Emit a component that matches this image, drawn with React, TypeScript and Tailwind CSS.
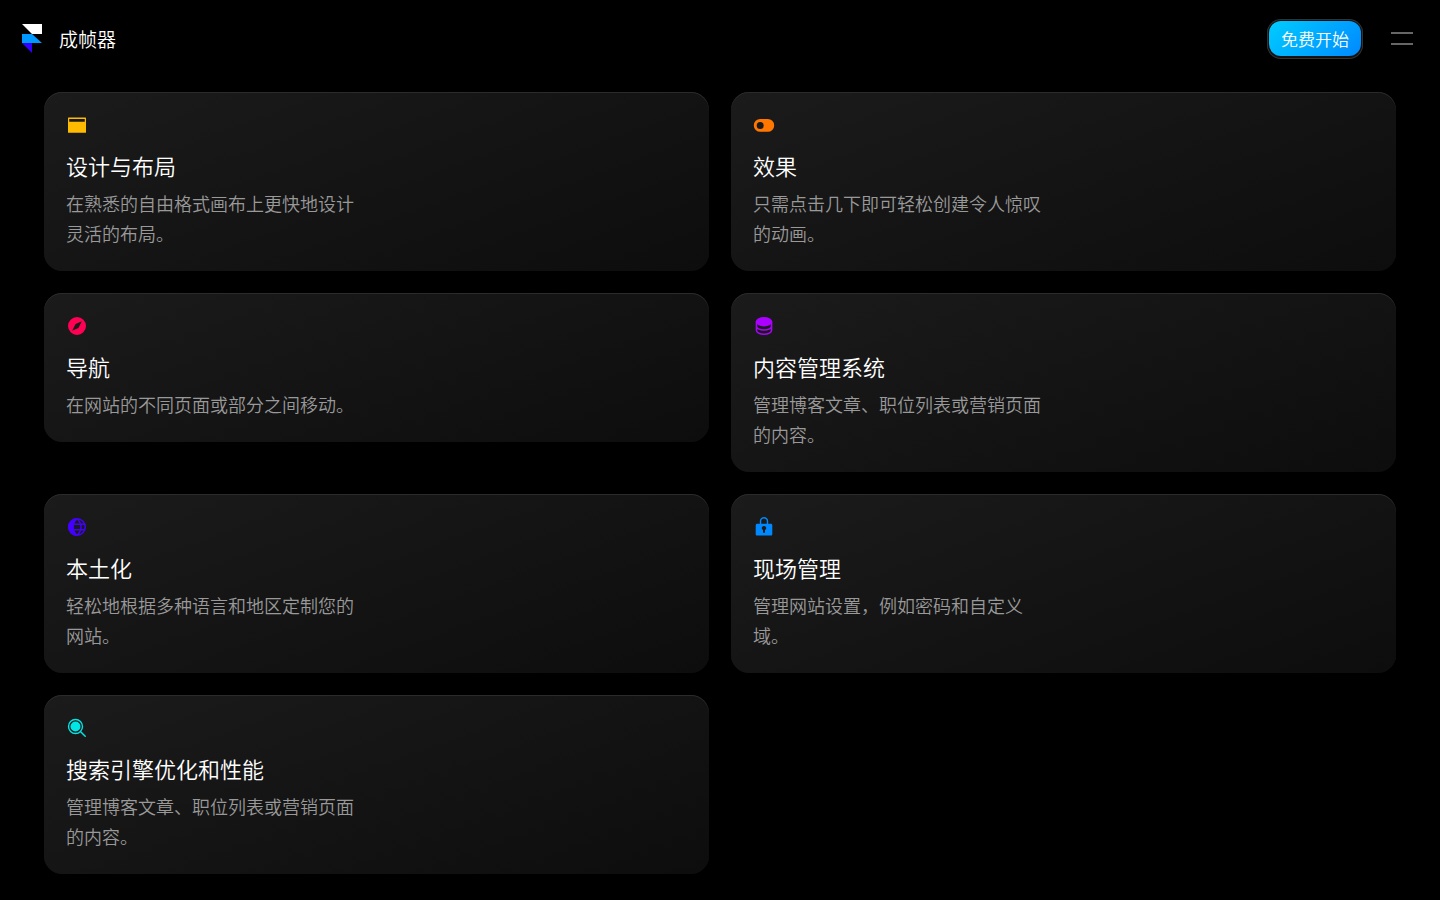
import type { ReactNode } from 'react'

interface Feature {
  title: string
  description: string
  icon: ReactNode
}

const features: Feature[] = [
  {
    title: '设计与布局',
    description: '在熟悉的自由格式画布上更快地设计灵活的布局。',
    icon: (
      <path
        fill="#ffbb00"
        fillRule="evenodd"
        d="M2.500 3.500h17a.5.5 0 0 1 .5.5v14.300a.5.5 0 0 1-.5.5h-17a.5.5 0 0 1-.5-.5V4a.5.5 0 0 1 .5-.5Zm.7 1.400v2.800h15.600V4.900Z"
      />
    ),
  },
  {
    title: '效果',
    description: '只需点击几下即可轻松创建令人惊叹的动画。',
    icon: (
      <path
        fill="#ff7700"
        fillRule="evenodd"
        d="M7.200 5h7.600a6.400 6.400 0 0 1 0 12.800H7.200A6.400 6.400 0 0 1 7.200 5Zm0 2.900a3.500 3.500 0 1 0 0 7 3.500 3.500 0 0 0 0-7Z"
      />
    ),
  },
  {
    title: '导航',
    description: '在网站的不同页面或部分之间移动。',
    icon: (
      <path
        fill="#ff0055"
        fillRule="evenodd"
        d="M11 2a9 9 0 1 1 0 18 9 9 0 0 1 0-18Zm4.900 4.200-6.300 2.900-3.500 6.700 6.300-2.900Z"
      />
    ),
  },
  {
    title: '内容管理系统',
    description: '管理博客文章、职位列表或营销页面的内容。',
    icon: (
      <>
        <ellipse cx="11" cy="6.800" rx="8.300" ry="4.700" fill="#aa00ff" />
        <path
          fill="none"
          stroke="#aa00ff"
          strokeWidth="1.500"
          d="M3.400 6.500v8.800c0 2.200 3.400 4 7.600 4s7.600-1.800 7.600-4V6.500M3.400 11c0 2.200 3.400 4 7.600 4s7.600-1.800 7.600-4"
        />
      </>
    ),
  },
  {
    title: '本土化',
    description: '轻松地根据多种语言和地区定制您的网站。',
    icon: (
      <>
        <path fill="#4400ff" d="M11 2a9 9 0 0 0 0 18C8.800 17.800 7.600 14.500 7.600 11S8.800 4.200 11 2Z" />
        <path
          fill="none"
          stroke="#4400ff"
          strokeWidth="1.400"
          d="M11 2.700a8.300 8.300 0 1 1 0 16.600 8.300 8.300 0 0 1 0-16.600c5.300 4.500 5.300 12.100 0 16.600-5.300-4.500-5.300-12.100 0-16.600ZM3.800 8.300h14.800M3.800 13.700h14.800"
        />
      </>
    ),
  },
  {
    title: '现场管理',
    description: '管理网站设置，例如密码和自定义域。',
    icon: (
      <>
        <path
          fill="#0088ff"
          fillRule="evenodd"
          d="M4.200 7.700h13.600c1 0 1.500.6 1.500 1.600v8.600c0 1-.5 1.600-1.500 1.600H4.200c-1 0-1.500-.6-1.500-1.600V9.300c0-1 .5-1.600 1.500-1.600ZM11 10a2.100 2.100 0 0 0-1 4v2.700h2V14a2.100 2.100 0 0 0-1-4Z"
        />
        <path fill="none" stroke="#0088ff" strokeWidth="1.400" d="M7.500 8.500V5.200a3.500 3.500 0 0 1 7 0v3.300" />
      </>
    ),
  },
  {
    title: '搜索引擎优化和性能',
    description: '管理博客文章、职位列表或营销页面的内容。',
    icon: (
      <>
        <circle cx="9.500" cy="9.500" r="5" fill="#00e5e5" />
        <circle cx="9.500" cy="9.500" r="7" fill="none" stroke="#00e5e5" strokeWidth="1.400" />
        <path fill="none" stroke="#00e5e5" strokeWidth="1.500" strokeLinecap="round" d="m14.700 14.700 4.500 4.500" />
      </>
    ),
  },
]

function FeatureCard({ feature }: { feature: Feature }) {
  return (
    <article className="rounded-[18px] bg-linear-160 from-[#1b1b1b] to-[#0d0d0d] px-[22px] pt-[22px] pb-[23px] shadow-[inset_0_1px_0_0_#2b2b2b]">
      <svg viewBox="0 0 22 22" className="size-[22px]" aria-hidden="true">
        {feature.icon}
      </svg>
      <h2 className="mt-3 text-[22px] leading-[34px] text-white">{feature.title}</h2>
      <p className="mt-1.5 max-w-[296px] text-[18px] leading-[30px] text-[#999999]">
        {feature.description}
      </p>
    </article>
  )
}

export default function App() {
  return (
    <div className="min-h-screen bg-black font-['Noto_Sans_CJK_SC',sans-serif] font-[350]">
      <header className="flex h-[77px] items-center justify-between pr-[27px] pl-[22px]">
        <a href="#" className="flex items-center gap-[17px] text-white">
          <svg viewBox="0 0 20 29" className="h-[29px] w-5" aria-hidden="true">
            <path fill="#ffffff" d="M0 0h20v10H10Z" />
            <path fill="#0099ff" d="M0 10h10l10 9H0Z" />
            <path fill="#3300ff" d="M0 19h10v10Z" />
          </svg>
          <span className="text-[19px] leading-[27px]">成帧器</span>
        </a>
        <div className="flex items-center gap-[30px]">
          <button
            type="button"
            className="h-[35px] rounded-xl bg-linear-135 from-[#00ccff] to-[#0088ff] px-3 text-[17px] text-white shadow-[0_1px_0_1px_#111111,0_0_0_1px_#111111,0_1px_0_2px_#333333,0_0_0_2px_#333333]"
          >
            免费开始
          </button>
          <button type="button" aria-label="菜单" className="flex flex-col gap-[9px]">
            <span className="h-0.5 w-[22px] bg-[#666666]" />
            <span className="h-0.5 w-[22px] bg-[#666666]" />
          </button>
        </div>
      </header>

      <main className="grid grid-cols-2 items-start gap-[22px] px-11 pt-[15px] pb-[22px]">
        {features.map((feature) => (
          <FeatureCard key={feature.title} feature={feature} />
        ))}
      </main>
    </div>
  )
}
